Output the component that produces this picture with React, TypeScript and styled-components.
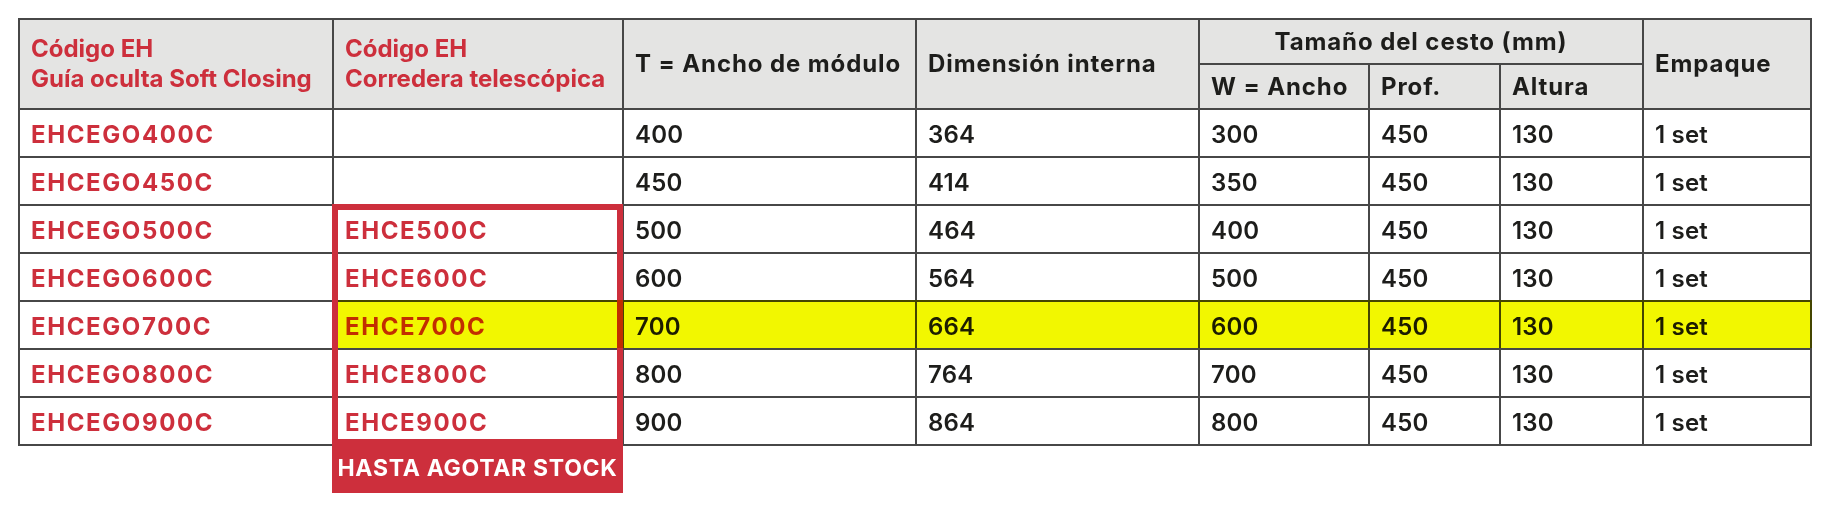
import React from 'react';
import styled, { createGlobalStyle } from 'styled-components';

const RED = '#cd2f3c';
const LINE = '#474747';
const COLS = [312, 288, 291, 281, 168, 129, 141, 166];
const HEAD_ROW = 43;
const ROW = 46;
const GAP = 2;

const rows = [
  ['EHCEGO400C', '', '400', '364', '300', '450', '130', '1 set'],
  ['EHCEGO450C', '', '450', '414', '350', '450', '130', '1 set'],
  ['EHCEGO500C', 'EHCE500C', '500', '464', '400', '450', '130', '1 set'],
  ['EHCEGO600C', 'EHCE600C', '600', '564', '500', '450', '130', '1 set'],
  ['EHCEGO700C', 'EHCE700C', '700', '664', '600', '450', '130', '1 set'],
  ['EHCEGO800C', 'EHCE800C', '800', '764', '700', '450', '130', '1 set'],
  ['EHCEGO900C', 'EHCE900C', '900', '864', '800', '450', '130', '1 set'],
];

// y of the top edge of body row i, measured from the grid's top
const rowTop = (i: number) => GAP + 2 * (HEAD_ROW + GAP) + i * (ROW + GAP);

const GlobalStyle = createGlobalStyle`
  html, body { margin: 0; background: #fff; }
  body { font-family: Inter, "Liberation Sans", sans-serif; }
`;

const Page = styled.div`
  min-height: 522px;
  box-sizing: border-box;
  padding: 18px 0 0 18px;
`;

const Wrap = styled.div`
  position: relative;
  width: fit-content;
  isolation: isolate;
`;

const Grid = styled.div`
  display: grid;
  grid-template-columns: ${COLS.map((c) => c + 'px').join(' ')};
  grid-template-rows: ${HEAD_ROW}px ${HEAD_ROW}px repeat(7, ${ROW}px);
  gap: ${GAP}px;
  padding: ${GAP}px;
  background: ${LINE};
`;

const Head = styled.div<{ $rows?: number; $cols?: number; $center?: boolean; $red?: boolean }>`
  grid-row: span ${(p) => p.$rows ?? 1};
  grid-column: span ${(p) => p.$cols ?? 1};
  background: #e4e4e3;
  display: flex;
  align-items: center;
  justify-content: ${(p) => (p.$center ? 'center' : 'flex-start')};
  padding: 0 11px;
  font-size: 24px;
  font-weight: 700;
  line-height: 30px;
  letter-spacing: ${(p) => (p.$red ? '0' : '0.9px')};
  color: ${(p) => (p.$red ? RED : '#1d1d1b')};
  white-space: nowrap;
`;

const Cell = styled.div<{ $code?: boolean }>`
  background: #fff;
  display: flex;
  align-items: center;
  padding: 3px 11px 0;
  font-size: 24px;
  font-weight: ${(p) => (p.$code ? 700 : 600)};
  letter-spacing: ${(p) => (p.$code ? '1.6px' : '0.2px')};
  color: ${(p) => (p.$code ? RED : '#1d1d1b')};
  white-space: nowrap;
`;

// red outline around the telescopic-slide codes, with its tag hanging below the table
const Frame = styled.div`
  position: absolute;
  left: ${COLS[0] + GAP}px;
  top: ${rowTop(2) - GAP}px;
  width: ${COLS[1] + 3}px;
  height: 289px;
  box-sizing: border-box;
  border: 6px solid ${RED};
  border-bottom: 0;
  display: flex;
  flex-direction: column;
  justify-content: flex-end;
  z-index: 1;
`;

const Tag = styled.div`
  flex: 0 0 54px;
  background: ${RED};
  color: #fff;
  display: flex;
  align-items: center;
  justify-content: center;
  padding-top: 4px;
  box-sizing: border-box;
  font-size: 23px;
  font-weight: 700;
  letter-spacing: 0.7px;
  white-space: nowrap;
`;

const Highlight = styled.div`
  position: absolute;
  left: ${COLS[0] + GAP + 6}px;
  right: 0;
  top: ${rowTop(4) - GAP}px;
  height: ${ROW + GAP}px;
  background: #f2f700;
  mix-blend-mode: multiply;
  z-index: 2;
`;

export default function App() {
  return (
    <Page>
      <GlobalStyle />
      <Wrap>
        <Grid>
          <Head $rows={2} $red>
            Código EH
            <br />
            Guía oculta Soft Closing
          </Head>
          <Head $rows={2} $red>
            Código EH
            <br />
            Corredera telescópica
          </Head>
          <Head $rows={2}>T = Ancho de módulo</Head>
          <Head $rows={2}>Dimensión interna</Head>
          <Head $cols={3} $center>
            Tamaño del cesto (mm)
          </Head>
          <Head $rows={2}>Empaque</Head>
          <Head>W = Ancho</Head>
          <Head>Prof.</Head>
          <Head>Altura</Head>
          {rows.map((r) =>
            r.map((v, j) => (
              <Cell key={r[0] + j} $code={j < 2}>
                {v}
              </Cell>
            ))
          )}
        </Grid>
        <Frame>
          <Tag>HASTA AGOTAR STOCK</Tag>
        </Frame>
        <Highlight />
      </Wrap>
    </Page>
  );
}
